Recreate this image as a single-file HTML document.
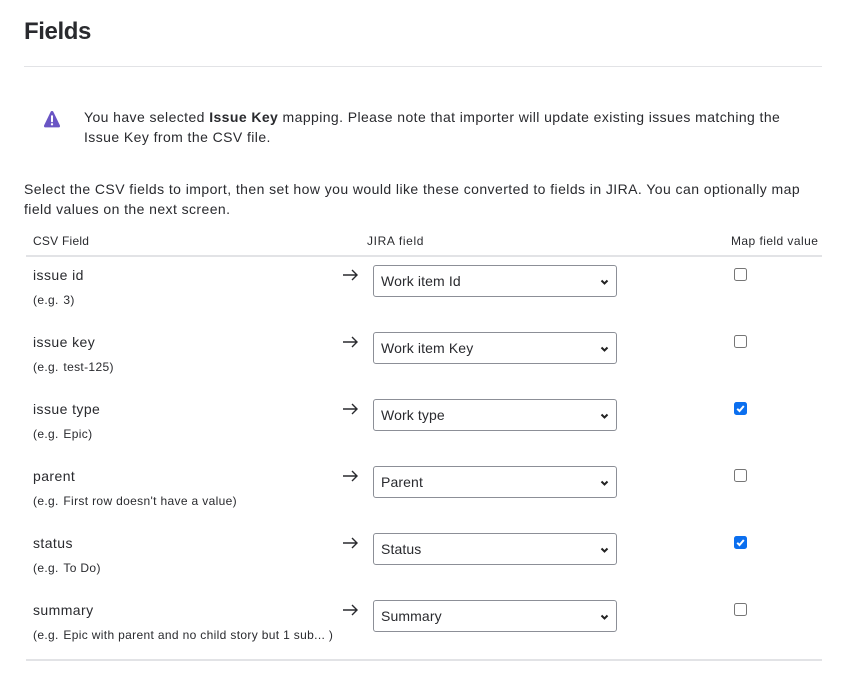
<!DOCTYPE html>
<html>
<head>
<meta charset="utf-8">
<style>
html,body{margin:0;padding:0;background:#fff;}
body{width:846px;height:679px;position:relative;overflow:hidden;font-family:"Liberation Sans",sans-serif;color:#292a2e;}
.t{position:absolute;white-space:pre;font-size:14px;line-height:20px;letter-spacing:.42px;}
.n{position:absolute;white-space:pre;font-size:14px;line-height:20px;letter-spacing:.42px;}
.s{position:absolute;white-space:pre;font-size:12px;line-height:16px;letter-spacing:.34px;color:#292a2e;}
.s i{font-style:normal;margin-left:1px;}
.l{position:absolute;background:#dfe1e6;}
.sel{position:absolute;left:373px;width:244px;height:32px;box-sizing:border-box;border:1px solid #8c8f97;border-radius:3px;background:#fff;}
.sel span{position:absolute;left:7px;top:5px;font-size:14px;line-height:20px;letter-spacing:.12px;white-space:pre;}
.sel svg{position:absolute;left:226px;top:13px;}
.cb{position:absolute;left:734px;width:13px;height:13px;box-sizing:border-box;border:1px solid #767676;border-radius:2.5px;background:#fff;}
.cb.on{background:#0b6fef;border-color:#0b6fef;}
.cb svg{position:absolute;left:0;top:0;}
.ar{position:absolute;left:342px;}
</style>
</head>
<body>
<div style="position:absolute;left:24px;top:16px;font-size:24px;line-height:32px;font-weight:700;letter-spacing:-.4px;color:#292a2e;">Fields</div>
<div class="l" style="left:24px;top:66px;width:798px;height:1px;background:#e2e3e6;"></div>

<svg style="position:absolute;left:43px;top:110px;" width="18" height="18" viewBox="0 0 18 18">
<path d="M9 1 C9.7 1 10.1 1.3 10.4 1.9 L16.9 15.4 C17.3 16.3 16.8 17.4 15.8 17.4 H2.2 C1.2 17.4 .7 16.3 1.1 15.4 L7.6 1.9 C7.9 1.3 8.3 1 9 1Z" fill="#6a55c4"/>
<rect x="8" y="5.2" width="2" height="7" rx=".8" fill="#fff"/>
<circle cx="9" cy="14.3" r="1.15" fill="#fff"/>
</svg>

<div class="t" style="left:84px;top:107px;letter-spacing:.41px;">You have selected <b>Issue Key</b> mapping. Please note that importer will update existing issues matching the</div>
<div class="t" style="left:84px;top:127px;">Issue Key from the CSV file.</div>

<div class="t" style="left:24px;top:179px;letter-spacing:.43px;">Select the CSV fields to import, then set how you would like these converted to fields in JIRA. You can optionally map</div>
<div class="t" style="left:24px;top:199px;">field values on the next screen.</div>

<div class="s" style="left:33px;top:233px;letter-spacing:.24px;">CSV Field</div>
<div class="s" style="left:367px;top:233px;letter-spacing:.64px;">JIRA field</div>
<div class="s" style="left:731px;top:233px;letter-spacing:.44px;">Map field value</div>
<div class="l" style="left:26px;top:255px;width:796px;height:2px;background:#e2e3e6;"></div>

<!-- row 1 -->
<div class="n" style="left:33px;top:265px;">issue id</div>
<div class="s" style="left:33px;top:292px;">(e.g. <i>3)</i></div>
<svg class="ar" style="top:267px;" width="16" height="16" viewBox="0 0 16 16"><path d="M1 8H15M10 3 15 8 10 13" fill="none" stroke="#292a2e" stroke-width="1.4"/></svg>
<div class="sel" style="top:265px;"><span>Work item Id</span><svg width="10" height="8" viewBox="0 0 10 8"><path d="M1.5 1.5 4.5 4.5 7.5 1.5" fill="none" stroke="#222" stroke-width="2"/></svg></div>
<div class="cb" style="top:268px;"></div>

<!-- row 2 -->
<div class="n" style="left:33px;top:332px;">issue key</div>
<div class="s" style="left:33px;top:359px;">(e.g. <i>test-125)</i></div>
<svg class="ar" style="top:334px;" width="16" height="16" viewBox="0 0 16 16"><path d="M1 8H15M10 3 15 8 10 13" fill="none" stroke="#292a2e" stroke-width="1.4"/></svg>
<div class="sel" style="top:332px;"><span>Work item Key</span><svg width="10" height="8" viewBox="0 0 10 8"><path d="M1.5 1.5 4.5 4.5 7.5 1.5" fill="none" stroke="#222" stroke-width="2"/></svg></div>
<div class="cb" style="top:335px;"></div>

<!-- row 3 -->
<div class="n" style="left:33px;top:399px;">issue type</div>
<div class="s" style="left:33px;top:426px;">(e.g. <i>Epic)</i></div>
<svg class="ar" style="top:401px;" width="16" height="16" viewBox="0 0 16 16"><path d="M1 8H15M10 3 15 8 10 13" fill="none" stroke="#292a2e" stroke-width="1.4"/></svg>
<div class="sel" style="top:399px;"><span>Work type</span><svg width="10" height="8" viewBox="0 0 10 8"><path d="M1.5 1.5 4.5 4.5 7.5 1.5" fill="none" stroke="#222" stroke-width="2"/></svg></div>
<div class="cb on" style="top:402px;"><svg width="11" height="11" viewBox="0 0 11 11"><path d="M2.2 5.8 4.5 8 8.8 3" fill="none" stroke="#fff" stroke-width="2"/></svg></div>

<!-- row 4 -->
<div class="n" style="left:33px;top:466px;">parent</div>
<div class="s" style="left:33px;top:493px;">(e.g. <i>First row doesn't have a value)</i></div>
<svg class="ar" style="top:468px;" width="16" height="16" viewBox="0 0 16 16"><path d="M1 8H15M10 3 15 8 10 13" fill="none" stroke="#292a2e" stroke-width="1.4"/></svg>
<div class="sel" style="top:466px;"><span>Parent</span><svg width="10" height="8" viewBox="0 0 10 8"><path d="M1.5 1.5 4.5 4.5 7.5 1.5" fill="none" stroke="#222" stroke-width="2"/></svg></div>
<div class="cb" style="top:469px;"></div>

<!-- row 5 -->
<div class="n" style="left:33px;top:533px;">status</div>
<div class="s" style="left:33px;top:560px;">(e.g. <i>To Do)</i></div>
<svg class="ar" style="top:535px;" width="16" height="16" viewBox="0 0 16 16"><path d="M1 8H15M10 3 15 8 10 13" fill="none" stroke="#292a2e" stroke-width="1.4"/></svg>
<div class="sel" style="top:533px;"><span>Status</span><svg width="10" height="8" viewBox="0 0 10 8"><path d="M1.5 1.5 4.5 4.5 7.5 1.5" fill="none" stroke="#222" stroke-width="2"/></svg></div>
<div class="cb on" style="top:536px;"><svg width="11" height="11" viewBox="0 0 11 11"><path d="M2.2 5.8 4.5 8 8.8 3" fill="none" stroke="#fff" stroke-width="2"/></svg></div>

<!-- row 6 -->
<div class="n" style="left:33px;top:600px;">summary</div>
<div class="s" style="left:33px;top:627px;">(e.g. <i>Epic with parent and no child story but 1 sub... )</i></div>
<svg class="ar" style="top:602px;" width="16" height="16" viewBox="0 0 16 16"><path d="M1 8H15M10 3 15 8 10 13" fill="none" stroke="#292a2e" stroke-width="1.4"/></svg>
<div class="sel" style="top:600px;"><span>Summary</span><svg width="10" height="8" viewBox="0 0 10 8"><path d="M1.5 1.5 4.5 4.5 7.5 1.5" fill="none" stroke="#222" stroke-width="2"/></svg></div>
<div class="cb" style="top:603px;"></div>

<div class="l" style="left:26px;top:659px;width:796px;height:2px;background:#e2e3e6;"></div>
</body>
</html>
